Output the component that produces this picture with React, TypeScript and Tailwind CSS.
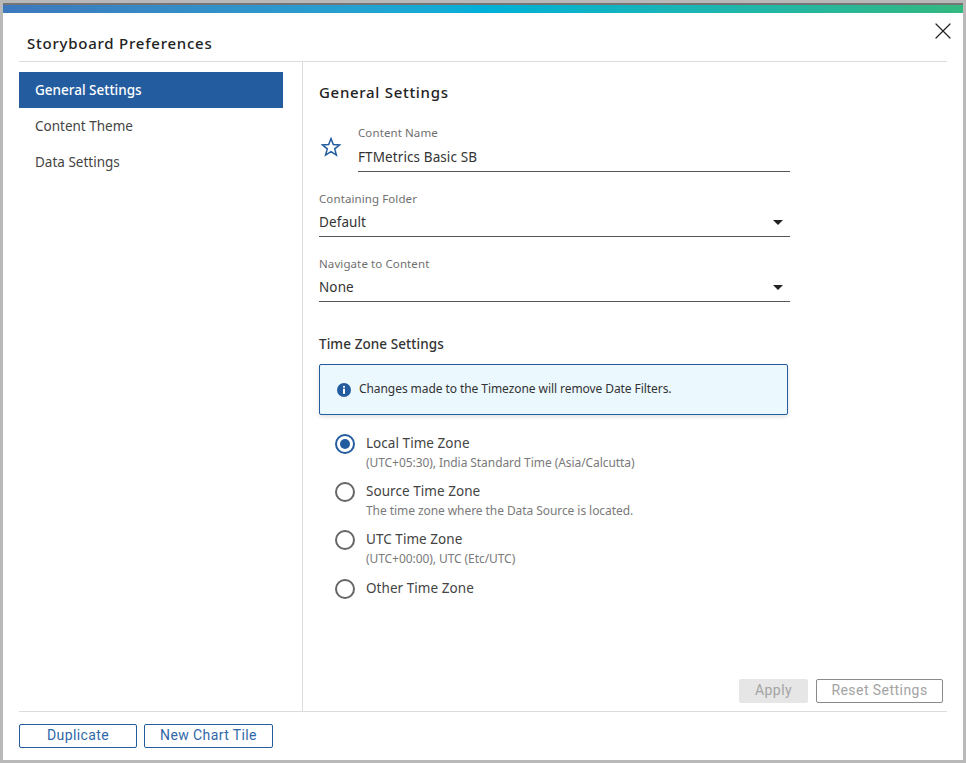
import { X } from "lucide-react";

const navItems = ["General Settings", "Content Theme", "Data Settings"];

const timeZones = [
  { label: "Local Time Zone", hint: "(UTC+05:30), India Standard Time (Asia/Calcutta)", checked: true },
  { label: "Source Time Zone", hint: "The time zone where the Data Source is located." },
  { label: "UTC Time Zone", hint: "(UTC+00:00), UTC (Etc/UTC)" },
  { label: "Other Time Zone" },
];

const SelectField = ({ label, value }: { label: string; value: string }) => (
  <div className="w-[471px]">
    <div className="text-[11.5px] leading-[16px] tracking-[0.1px] text-[#6f6f6f]">{label}</div>
    <div className="mt-[3px] flex h-[27px] items-center justify-between border-b border-[#555555] pb-[1px] pr-[7px]">
      <span className="text-[13.5px] tracking-[0.1px] text-[#333333]">{value}</span>
      <span className="h-0 w-0 border-x-[5px] border-t-[5px] border-x-transparent border-t-[#222222]" />
    </div>
  </div>
);

const Radio = ({ checked }: { checked?: boolean }) => (
  <span
    className={`flex h-[20px] w-[20px] shrink-0 items-center justify-center rounded-full border-2 ${
      checked ? "border-[#235c9f]" : "border-[#666666]"
    }`}
  >
    {checked && <span className="h-[10px] w-[10px] rounded-full bg-[#235c9f]" />}
  </span>
);

export default function App() {
  return (
    <div className="h-[763px] w-[966px] overflow-hidden bg-[#b9b9b9] p-[3px] font-['Noto_Sans',sans-serif]">
      <div className="relative flex h-full flex-col bg-white">
        <div className="h-[2px] bg-[#757575]" />
        <div className="h-[8px] bg-gradient-to-r from-[#3d78bd] via-[#00b0d8] to-[#33b87f]" />

        <button className="absolute right-[6px] top-[14px] text-[#222222]">
          <X size={28} strokeWidth={1.05} />
        </button>

        <div className="mx-[16px] flex h-[49px] items-end border-b border-[#dcdcdc] pb-[8px] pl-[8px]">
          <h1 className="text-[15px] font-medium leading-[20px] tracking-[0.76px] text-[#222222]">
            Storyboard Preferences
          </h1>
        </div>

        <div className="mx-[16px] flex flex-1">
          <div className="w-[284px] border-r border-[#dcdcdc] pt-[10px]">
            {navItems.map((item, i) => (
              <div
                key={item}
                className={`flex h-[36px] w-[264px] items-center pl-[16px] text-[13.5px] ${
                  i === 0 ? "bg-[#235c9f] font-medium text-white" : "text-[#444444]"
                }`}
              >
                {item}
              </div>
            ))}
          </div>

          <div className="flex flex-1 flex-col pl-[16px]">
            <h2 className="mt-[20px] text-[15px] font-medium leading-[20px] tracking-[0.7px] text-[#222222]">
              General Settings
            </h2>

            <div className="mt-[23px] flex w-[471px] items-center">
              <svg viewBox="0 0 20 20" className="mb-[4px] ml-[2px] h-[20px] w-[20px] shrink-0">
                <polygon
                  points="10,1.6 12.3,7.6 18.7,7.9 13.7,11.9 15.4,18.1 10,14.6 4.6,18.1 6.3,11.9 1.3,7.9 7.7,7.6"
                  fill="none"
                  stroke="#235c9f"
                  strokeWidth="1.5"
                />
              </svg>
              <div className="ml-[17px] flex-1">
                <div className="text-[11.5px] leading-[16px] tracking-[0.1px] text-[#6f6f6f]">Content Name</div>
                <div className="mt-[4px] flex h-[27px] items-center border-b border-[#555555] pb-[1px] text-[13.5px] tracking-[0.1px] text-[#333333]">
                  FTMetrics Basic SB
                </div>
              </div>
            </div>

            <div className="mt-[19px]">
              <SelectField label="Containing Folder" value="Default" />
            </div>
            <div className="mt-[19px]">
              <SelectField label="Navigate to Content" value="None" />
            </div>

            <h3 className="mt-[32px] text-[13.5px] font-medium leading-[20px] tracking-[0.07px] text-[#333333]">
              Time Zone Settings
            </h3>

            <div className="mt-[10px] flex h-[51px] w-[469px] items-center rounded-[2px] border border-[#235c9f] bg-[#ebf8fe] pl-[17px] shadow-[0_2px_4px_rgba(0,0,0,0.12)]">
              <svg viewBox="0 0 14 14" className="h-[14px] w-[14px] shrink-0">
                <circle cx="7" cy="7" r="7" fill="#235c9f" />
                <circle cx="7" cy="3.8" r="1.1" fill="#fff" />
                <rect x="6" y="5.8" width="2" height="5" fill="#fff" />
              </svg>
              <span className="mb-[2px] ml-[8px] text-[12px] tracking-[-0.07px] text-[#333333]">
                Changes made to the Timezone will remove Date Filters.
              </span>
            </div>

            <div className="mt-[18px] flex flex-col pl-[16px]">
              {timeZones.map((tz) => (
                <div key={tz.label} className="flex h-[48px] gap-[11px] last:pt-[1px]">
                  <div className="pt-[1px]">
                    <Radio checked={tz.checked} />
                  </div>
                  <div>
                    <div className="text-[13.5px] leading-[20px] tracking-[0.05px] text-[#444444]">{tz.label}</div>
                    {tz.hint && (
                      <div className="mt-[2px] text-[12px] leading-[15px] tracking-[-0.07px] text-[#7a7a7a]">
                        {tz.hint}
                      </div>
                    )}
                  </div>
                </div>
              ))}
            </div>

            <div className="mb-[8px] mr-[4px] mt-auto flex justify-end gap-[8px]">
              <button className="h-[24px] w-[69px] rounded-[2px] bg-[#e6e6e6] pb-[2px] [font-family:Roboto,sans-serif] text-[14px] tracking-[0.45px] text-[#a3a3a3]">
                Apply
              </button>
              <button className="h-[24px] w-[127px] rounded-[2px] border border-[#8a8a8a] pb-[2px] [font-family:Roboto,sans-serif] text-[14px] tracking-[0.45px] text-[#a3a3a3]">
                Reset Settings
              </button>
            </div>
          </div>
        </div>

        <div className="mx-[16px] flex h-[49px] gap-[7px] border-t border-[#dcdcdc] py-[12px]">
          <button className="h-[24px] w-[118px] rounded-[2px] border border-[#235c9f] pb-[2px] [font-family:Roboto,sans-serif] text-[14px] tracking-[0.4px] text-[#2f68a8]">
            Duplicate
          </button>
          <button className="h-[24px] w-[129px] rounded-[2px] border border-[#235c9f] pb-[2px] [font-family:Roboto,sans-serif] text-[14px] tracking-[0.4px] text-[#2f68a8]">
            New Chart Tile
          </button>
        </div>
      </div>
    </div>
  );
}
